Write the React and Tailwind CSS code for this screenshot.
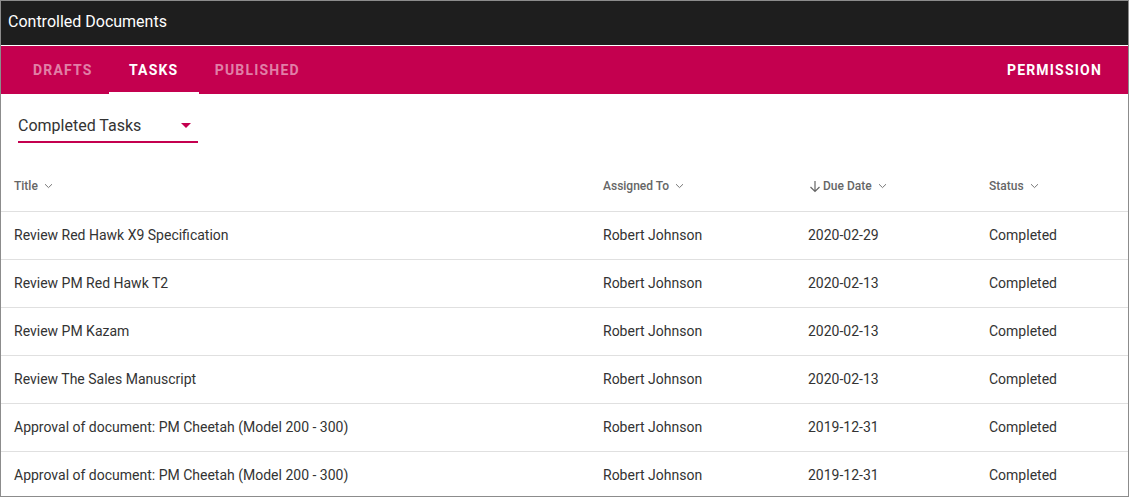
import React from "react";

const COLUMNS = [
  { key: "title", label: "Title", width: "w-[589px]" },
  { key: "assignedTo", label: "Assigned To", width: "w-[205px]" },
  { key: "dueDate", label: "Due Date", width: "w-[181px]", sorted: true },
  { key: "status", label: "Status", width: "flex-1" }
];

const TASKS = [
  { title: "Review Red Hawk X9 Specification", assignedTo: "Robert Johnson", dueDate: "2020-02-29", status: "Completed" },
  { title: "Review PM Red Hawk T2", assignedTo: "Robert Johnson", dueDate: "2020-02-13", status: "Completed" },
  { title: "Review PM Kazam", assignedTo: "Robert Johnson", dueDate: "2020-02-13", status: "Completed" },
  { title: "Review The Sales Manuscript", assignedTo: "Robert Johnson", dueDate: "2020-02-13", status: "Completed" },
  { title: "Approval of document: PM Cheetah (Model 200 - 300)", assignedTo: "Robert Johnson", dueDate: "2019-12-31", status: "Completed" },
  { title: "Approval of document: PM Cheetah (Model 200 - 300)", assignedTo: "Robert Johnson", dueDate: "2019-12-31", status: "Completed" }
];

const TABS = ["Drafts", "Tasks", "Published"];

function Chevron() {
  return (
    <svg width="9" height="6" viewBox="0 0 9 6" className="ml-[6px] mt-[1px]">
      <path d="M1 1.2 L4.5 4.6 L8 1.2" fill="none" stroke="#777" strokeWidth="1" />
    </svg>
  );
}

function ArrowDown() {
  return (
    <svg width="12" height="13" viewBox="0 0 12 13" className="mr-[2px] mt-[1px]">
      <path d="M6 1 V11.5 M1.5 7 L6 11.5 L10.5 7" fill="none" stroke="#666" strokeWidth="1.2" />
    </svg>
  );
}

export default function App() {
  return (
    <div className="w-[1129px] h-[497px] overflow-hidden border border-[#8c8c8c] bg-white font-['Roboto',sans-serif]">
      <header className="box-content flex h-[42px] items-center border-b border-white bg-[#1e1e1e] px-[7px] pb-[2px] text-[16px] text-white">
        Controlled Documents
      </header>

      <nav className="flex h-[48px] items-stretch bg-[#c4004f] pl-[16px] pr-[10px]">
        {TABS.map((tab) => {
          const active = tab === "Tasks";
          return (
            <div
              key={tab}
              className={`flex min-w-[90px] items-center justify-center px-4 text-[14px] font-bold uppercase tracking-[1.2px] ${
                active ? "border-b-2 border-white pt-[2px] text-white" : "text-white/50"
              }`}
            >
              {tab}
            </div>
          );
        })}
        <div className="ml-auto flex items-center px-4 text-[14px] font-bold uppercase tracking-[1.2px] text-white">
          Permission
        </div>
      </nav>

      <div className="ml-[17px] mt-[14px] flex h-[35px] w-[180px] items-center justify-between border-b-2 border-[#c4004f] pt-[2px]">
        <span className="text-[16px] text-[#333]">Completed Tasks</span>
        <svg width="10" height="5" viewBox="0 0 10 5" className="mr-[7px]">
          <path d="M0 0 H10 L5 5 Z" fill="#c4004f" />
        </svg>
      </div>

      <div className="flex h-[68px] items-center pl-[13px] pt-[17px] text-[12px] font-medium text-[#666]">
        {COLUMNS.map((col) => (
          <div key={col.key} className={`${col.width} flex items-center ${col.sorted ? "pl-[1px]" : ""}`}>
            {col.sorted && <ArrowDown />}
            <span>{col.label}</span>
            <Chevron />
          </div>
        ))}
      </div>

      {TASKS.map((task, i) => (
        <div key={i} className="flex h-[48px] items-center border-t border-[#e0e0e0] pl-[13px] text-[14px] text-[#333]">
          {COLUMNS.map((col) => (
            <div key={col.key} className={col.width}>
              {task[col.key]}
            </div>
          ))}
        </div>
      ))}
    </div>
  );
}
